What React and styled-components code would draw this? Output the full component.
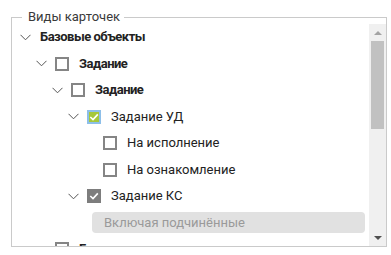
import React from "react";
import styled, { createGlobalStyle } from "styled-components";

const GlobalStyle = createGlobalStyle`
  html, body { margin: 0; padding: 0; background: #ffffff; }
  body { font-family: Roboto, "Noto Sans", "Liberation Sans", sans-serif; color: #222; }
`;

const Page = styled.div`
  padding: 10px 0 0 11px;
  width: 391px;
  height: 255px;
  box-sizing: border-box;
  overflow: hidden;
`;

const Fieldset = styled.fieldset`
  margin: 0;
  padding: 0;
  width: 376px;
  box-sizing: border-box;
  border: 1px solid #cacaca;
  min-width: 0;
`;

const Legend = styled.legend`
  margin-left: 10px;
  padding: 0 4px 0 6px;
  font-size: 13px;
  line-height: 14px;
  color: #3a3a3a;
`;

const ScrollArea = styled.div`
  display: flex;
  height: 222px;
`;

const Tree = styled.div`
  flex: 1;
  min-width: 0;
  overflow: hidden;
`;

const Row = styled.div`
  display: flex;
  align-items: center;
  height: 26.5px;
  padding-left: ${(p) => 7 + p.$level * 16}px;
  padding-right: 4px;
  box-sizing: border-box;
  white-space: nowrap;
`;

const ChevronSlot = styled.span`
  width: 12px;
  height: 12px;
  display: flex;
  align-items: center;
  justify-content: center;
  flex: none;
  margin-right: ${(p) => (p.$withBox ? 8 : 9)}px;
`;

const Box = styled.span`
  width: 14px;
  height: 14px;
  box-sizing: border-box;
  flex: none;
  display: flex;
  align-items: center;
  justify-content: center;
  margin-right: 10px;
  border: 2px solid
    ${(p) => (p.$state === "green" ? "#8dbfe9" : p.$state === "grey" ? "#7d7d7d" : "#858585")};
  background: ${(p) => (p.$state === "green" ? "#a6c83b" : p.$state === "grey" ? "#7d7d7d" : "#fff")};
`;

const Label = styled.span`
  font-size: 13px;
  line-height: 16px;
  font-weight: ${(p) => (p.$bold ? 700 : 400)};
  letter-spacing: ${(p) => (p.$bold ? "-0.5px" : "0")};
  color: #222;
`;

const SubButton = styled.button`
  margin-left: 73px;
  flex: 1;
  height: 21px;
  border: none;
  border-radius: 4px;
  background: #e1e1e1;
  color: #9a9a9a;
  font-family: inherit;
  font-size: 13px;
  text-align: left;
  padding: 0 12px;
  cursor: default;
`;

const Scrollbar = styled.div`
  width: 17px;
  flex: none;
  background: #f0f0f0;
  display: flex;
  flex-direction: column;
`;

const ArrowButton = styled.div`
  height: 17px;
  flex: none;
  display: flex;
  align-items: center;
  justify-content: center;
`;

const Triangle = styled.span`
  width: 0;
  height: 0;
  border-left: 4px solid transparent;
  border-right: 4px solid transparent;
  ${(p) =>
    p.$up
      ? `border-bottom: 4px solid #a3a3a3;`
      : `border-top: 4px solid #505050;`}
`;

const Track = styled.div`
  flex: 1;
`;

const Thumb = styled.div`
  margin: 0 2px;
  height: 88px;
  background: #c1c1c1;
`;

const Chevron = () => (
  <svg width="11" height="7" viewBox="0 0 11 7">
    <polyline points="0.5,0.8 5.5,5.8 10.5,0.8" fill="none" stroke="#555" strokeWidth="1" />
  </svg>
);

const Check = () => (
  <svg width="10" height="10" viewBox="0 0 10 10">
    <polyline points="1.3,5 4,7.6 8.8,2.4" fill="none" stroke="#fff" strokeWidth="1.6" />
  </svg>
);

const TreeRow = ({ level, expandable = true, box, bold, children }) => (
  <Row $level={level}>
    <ChevronSlot $withBox={box !== undefined}>{expandable && <Chevron />}</ChevronSlot>
    {box !== undefined && <Box $state={box}>{box !== "none" && <Check />}</Box>}
    <Label $bold={bold}>{children}</Label>
  </Row>
);

export default function App() {
  return (
    <>
      <GlobalStyle />
      <Page>
        <Fieldset>
          <Legend>Виды карточек</Legend>
          <ScrollArea>
            <Tree>
              <TreeRow level={0} bold>Базовые объекты</TreeRow>
              <TreeRow level={1} box="none" bold>Задание</TreeRow>
              <TreeRow level={2} box="none" bold>Задание</TreeRow>
              <TreeRow level={3} box="green">Задание УД</TreeRow>
              <TreeRow level={4} box="none" expandable={false}>На исполнение</TreeRow>
              <TreeRow level={4} box="none" expandable={false}>На ознакомление</TreeRow>
              <TreeRow level={3} box="grey">Задание КС</TreeRow>
              <Row $level={0}>
                <SubButton type="button">Включая подчинённые</SubButton>
              </Row>
              <TreeRow level={1} box="none" bold>Бизнес-процессы</TreeRow>
            </Tree>
            <Scrollbar>
              <ArrowButton><Triangle $up /></ArrowButton>
              <Track><Thumb /></Track>
              <ArrowButton><Triangle /></ArrowButton>
            </Scrollbar>
          </ScrollArea>
        </Fieldset>
      </Page>
    </>
  );
}
